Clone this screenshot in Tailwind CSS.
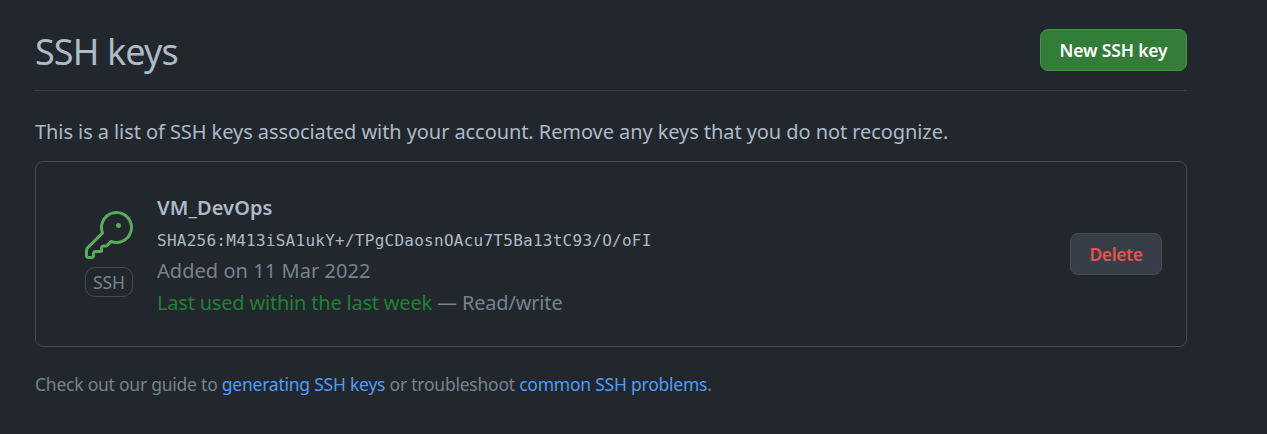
<!DOCTYPE html>
<html lang="en"><head><meta charset="utf-8"><title>SSH keys</title>
<script src="https://cdn.jsdelivr.net/npm/@tailwindcss/browser@4"></script></head>
<body class="bg-[#22272e] text-[#adbac7] font-['Noto_Sans',sans-serif] w-[1267px] h-[434px] overflow-hidden">
<main class="ml-[35px] w-[1152px] pt-[29px]">
<header class="flex h-[62px] items-start justify-between border-b border-[#373e47]">
<h1 class="text-[36px] leading-[46px] tracking-[-0.9px] whitespace-nowrap">SSH keys</h1>
<button class="h-[42px] w-[147px] rounded-lg border border-[#46954a] bg-[#347d39] text-[17.5px] tracking-[-0.15px] font-semibold text-white whitespace-nowrap">New SSH key</button>
</header>
<p class="mt-[25px] text-[20px] leading-[32px] whitespace-nowrap tracking-[-0.075px]">This is a list of SSH keys associated with your account. Remove any keys that you do not recognize.</p>
<section class="mt-[13px] flex h-[186px] items-center rounded-lg border border-[#444c56] pl-[49px] pr-[24px]">
<div class="flex w-[48px] flex-col items-center">
<svg class="size-[48px] fill-[#57ab5a]" viewBox="0 0 24 24"><path d="M16.75 8.5a1.25 1.25 0 1 0 0-2.5 1.25 1.25 0 0 0 0 2.5Z"/><path d="M15.75 0a8.25 8.25 0 1 1-2.541 16.101l-1.636 1.636a1.744 1.744 0 0 1-1.237.513H9.25a.25.25 0 0 0-.25.25v1.448a.876.876 0 0 1-.256.619l-.214.213a.75.75 0 0 1-.545.22H5.25a.25.25 0 0 0-.25.25v1A1.75 1.75 0 0 1 3.25 24h-1.5A1.75 1.75 0 0 1 0 22.25v-2.836c0-.464.185-.908.513-1.236l7.386-7.388A8.249 8.249 0 0 1 15.75 0ZM9 8.25a6.733 6.733 0 0 0 .463 2.462.75.75 0 0 1-.168.804l-7.722 7.721a.25.25 0 0 0-.073.177v2.836c0 .138.112.25.25.25h1.5a.25.25 0 0 0 .25-.25v-1c0-.966.784-1.75 1.75-1.75H7.5v-1c0-.966.784-1.75 1.75-1.75h1.086a.25.25 0 0 0 .177-.073l1.971-1.972a.75.75 0 0 1 .804-.168A6.75 6.75 0 1 0 9 8.25Z"/></svg>
<span class="mt-[8px] flex h-[30px] w-[48px] items-center justify-center rounded-[10px] border border-[#444c56] text-[17.5px] text-[#768390]">SSH</span>
</div>
<div class="ml-[24px] flex flex-1 flex-col whitespace-nowrap pt-[3px] text-[20px] leading-[32px] text-[#768390]">
<strong class="font-semibold tracking-[0.1px] text-[#adbac7]">VM_DevOps</strong>
<code class="pt-px h-[31px] font-['DejaVu_Sans_Mono',monospace] text-[16px] tracking-[0.26px] text-[#adbac7]">SHA256:M413iSA1ukY+/TPgCDaosnOAcu7T5Ba13tC93/O/oFI</code>
<span class="tracking-[0.05px]">Added on 11 Mar 2022</span>
<span class="tracking-[-0.17px]"><span class="tracking-[-0.2px] text-[#208035]">Last used within the last week</span> — Read/write</span>
</div>
<button class="h-[42px] w-[92px] rounded-lg border border-[#444c56] bg-[#373e47] text-[17.5px] tracking-[-0.4px] font-semibold text-[#e5534b]">Delete</button>
</section>
<p class="mt-[23px] text-[17.5px] leading-[28px] tracking-[-0.235px] text-[#768390] whitespace-nowrap">Check out our guide to <a class="text-[#539bf5]">generating SSH keys</a> or troubleshoot <a class="text-[#539bf5]">common SSH problems</a>.</p>
</main></body></html>
